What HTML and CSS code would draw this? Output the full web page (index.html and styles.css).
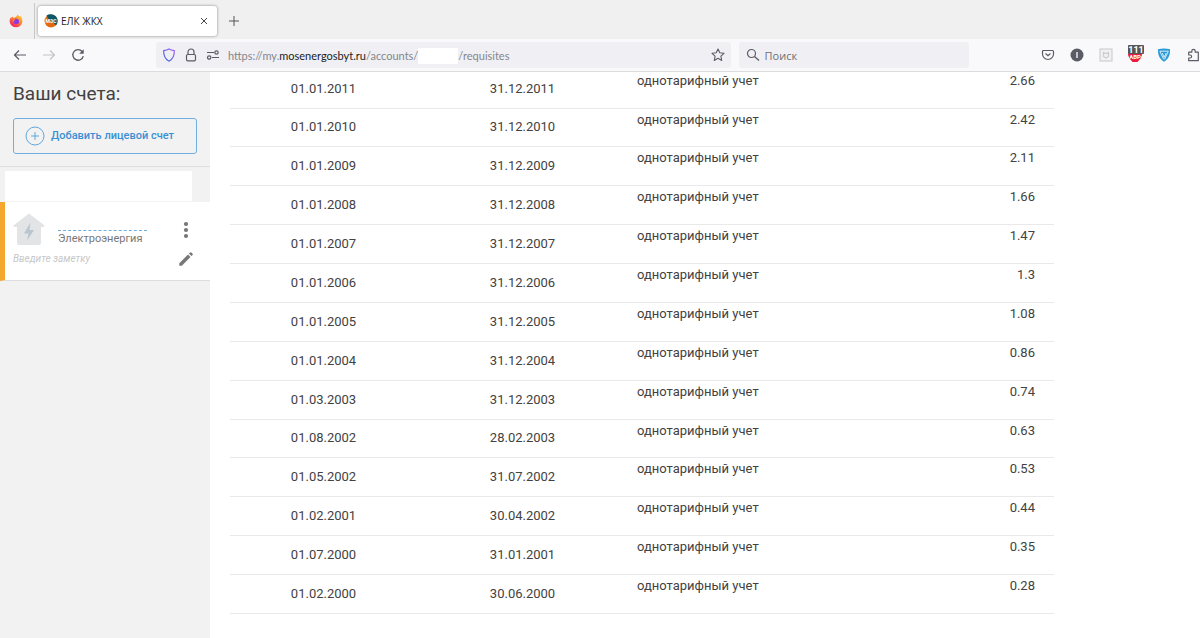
FILE: index.html
```html
<!DOCTYPE html>
<html lang="ru">
<head>
<meta charset="utf-8">
<title>ЕЛК ЖКХ</title>
<link rel="stylesheet" href="styles.css">
</head>
<body>
<header class="browser">
  <div class="tabs">
    <button class="firefox" aria-label="Firefox View">
      <svg width="14" height="14" viewBox="0 0 14 14"><defs><linearGradient id="fx" x1="1" y1="0" x2="0.2" y2="1"><stop offset="0" stop-color="#ffe23a"/><stop offset=".45" stop-color="#ff8a2a"/><stop offset="1" stop-color="#f5156c"/></linearGradient></defs><path d="M8.6.4c1 .8 1.2 1.6 1.7 2.2l.8-.5c1.500 1.300 2.500 3.400 2.300 5.600A6.400 6.400 0 0 1 .7 7.800C.6 5.800 1.100 4.200 2.300 3l.2 1 1.100-1.500.7 1.400C6.100 3.500 7.500 2.500 8.600.4z" fill="url(#fx)"/><circle cx="7.300" cy="7.400" r="2.700" fill="#8a3be0"/><path d="M3.300 5.600c1.300-.8 2.600-.3 3.300.6-1.400 0-1.800.7-1.800 1.600-.8-.4-1.400-1.200-1.500-2.200z" fill="#ff8427"/></svg>
    </button>
    <div class="tab">
      <svg width="14" height="14" viewBox="0 0 14 14"><circle cx="7" cy="7" r="6.500" fill="#e06a12"/><path d="M2.500 1.500C6-.8 11.500.5 13.200 4.500c.8 2.500.3 5-1.200 7L9.500 8.500 4.500 5z" fill="#0c5866"/><text x="7" y="8.800" text-anchor="middle" class="favicon-text">МЭС</text></svg>
      <span class="tab-title">ЕЛК ЖКХ</span>
      <button class="tab-close" aria-label="Закрыть вкладку"><svg width="8" height="8" viewBox="0 0 8 8"><path d="M1 1l6 6M7 1L1 7" stroke="#444" fill="none"/></svg></button>
    </div>
    <button class="new-tab" aria-label="Новая вкладка"><svg width="12" height="12" viewBox="0 0 12 12"><path d="M6 1v10M1 6h10" stroke="#555" fill="none"/></svg></button>
  </div>
  <div class="toolbar">
    <nav class="history">
      <button class="tool" aria-label="Назад"><svg width="14" height="14" viewBox="0 0 14 14"><path d="M13 7H1.500M6 2.500L1.500 7 6 11.500" stroke="#5b5b66" stroke-width="1.200" fill="none"/></svg></button>
      <button class="tool" aria-label="Вперёд" disabled><svg width="14" height="14" viewBox="0 0 14 14"><path d="M1 7h11.500M8 2.500L12.500 7 8 11.500" stroke="#c3c3c8" stroke-width="1.200" fill="none"/></svg></button>
      <button class="tool" aria-label="Обновить"><svg width="14" height="14" viewBox="0 0 14 14"><path d="M11.200 3.500A5.300 5.300 0 1 0 12.300 8.200" stroke="#5b5b66" stroke-width="1.300" fill="none"/><path d="M12.700 1.200v4.500H8.200z" fill="#5b5b66"/></svg></button>
    </nav>
    <div class="urlbar">
      <svg width="14" height="14" viewBox="0 0 14 14"><defs><linearGradient id="sh" x1="1" y1="0" x2="0" y2="1"><stop offset="0" stop-color="#a35cf0"/><stop offset="1" stop-color="#3d6be0"/></linearGradient></defs><path d="M7 1c1.600 1 3.400 1.400 5.300 1.600C12.500 8 11 11.300 7 13.200 3 11.300 1.500 8 1.700 2.600 3.600 2.400 5.400 2 7 1z" fill="none" stroke="url(#sh)" stroke-width="1.200"/></svg>
      <svg width="14" height="14" viewBox="0 0 14 14"><rect x="2.500" y="6.500" width="9" height="6.300" rx="1.300" fill="none" stroke="#5b5b66" stroke-width="1.200"/><path d="M4 6.500V4a3 3 0 0 1 6 0v2.500" fill="none" stroke="#5b5b66" stroke-width="1.200"/></svg>
      <svg width="14" height="14" viewBox="0 0 14 14"><g fill="none" stroke="#5b5b66" stroke-width="1.200"><path d="M1 4.500h7M6 9.500h7"/><circle cx="10.500" cy="4.500" r="1.700"/><circle cx="3.200" cy="9.500" r="1.700"/></g></svg>
      <div class="url" role="textbox" aria-label="Адрес">https://my.<b class="host">mosenergosbyt.ru</b>/accounts/<span class="blank"></span>/requisites</div>
      <button class="star" aria-label="Добавить в закладки"><svg width="14" height="14" viewBox="0 0 14 14"><path d="M7 1l1.800 3.800 4.200.5-3.100 2.900.8 4.200L7 10.300l-3.700 2.100.8-4.200L1 5.300l4.200-.5z" fill="none" stroke="#5b5b66" stroke-width="1.100" stroke-linejoin="round"/></svg></button>
    </div>
    <label class="search">
      <svg width="14" height="14" viewBox="0 0 14 14"><circle cx="5.500" cy="5.500" r="4" fill="none" stroke="#5b5b66" stroke-width="1.200"/><path d="M8.500 8.500l4.500 4" stroke="#5b5b66" stroke-width="1.300"/></svg>
      <input class="search-input" type="text" placeholder="Поиск" aria-label="Поиск">
    </label>
    <div class="extensions">
      <button class="tool" aria-label="Pocket"><svg width="14" height="14" viewBox="0 0 14 14"><path d="M2.500 2.500h9a1 1 0 0 1 1 1V6a5.500 5.500 0 0 1-11 0V3.500a1 1 0 0 1 1-1z" fill="none" stroke="#5b5b66" stroke-width="1.200"/><path d="M4.500 5.500L7 7.800l2.500-2.300" fill="none" stroke="#5b5b66" stroke-width="1.200"/></svg></button>
      <button class="tool" aria-label="Инфо"><svg width="14" height="14" viewBox="0 0 14 14"><circle cx="7" cy="7" r="6.500" fill="#5b5b66"/><path d="M7 4v6" stroke="#fff" stroke-width="1.300"/></svg></button>
      <button class="tool" aria-label="McAfee"><svg width="14" height="14" viewBox="0 0 14 14"><rect x="1" y="1" width="12" height="12" fill="#f1f1f3" stroke="#cfcfd3" stroke-width="1.200"/><path d="M4.500 4.500L7 5.600l2.500-1.100v4L7 10 4.500 8.500z" fill="none" stroke="#cbcbcf" stroke-width="1.200"/></svg></button>
      <button class="tool" aria-label="Adblock Plus"><svg width="18" height="20" viewBox="0 0 18 20"><path d="M3 5h12l1 5-1.500 3.500-3 3.500h-5l-3-3.500L2 10z" fill="#ee1c3c"/><text x="9" y="14" text-anchor="middle" class="abp-text">ABP</text><rect x="2" y="0" width="16" height="9" rx="1" fill="#555"/><text x="10" y="8" text-anchor="middle" class="abp-count">111</text></svg></button>
      <button class="tool" aria-label="Adguard"><svg width="14" height="14" viewBox="0 0 14 14"><path d="M1 1.200C5 .4 9 .4 13 1.200 13.300 7 11.300 11 7 13.700 2.700 11 .7 7 1 1.200z" fill="#2b9bd8"/><path d="M3 3.200h8.300L7.500 11.500M2.800 3.200l3.800 8M5.300 5l1.900 4.500L9.200 5" fill="none" stroke="#fff" stroke-width=".8"/></svg></button>
      <button class="tool" aria-label="Расширения"><svg width="14" height="14" viewBox="0 0 14 14"><path d="M2.700 4.200h3.100V3a1.700 1.700 0 0 1 3.400 0v1.200h3.100v8.500H2.700V10h1.400a1.500 1.500 0 0 0 0-3H2.700z" fill="none" stroke="#5b5b66" stroke-width="1.200" stroke-linejoin="round"/></svg></button>
    </div>
  </div>
</header>
<div class="page">
  <aside class="sidebar">
    <section class="accounts">
      <h1 class="title">Ваши счета:</h1>
      <button class="add"><svg width="20" height="20" viewBox="0 0 20 20"><circle cx="10" cy="10" r="9" fill="none" stroke="#5fa8de"/><path d="M10 6v8M6 10h8" stroke="#5fa8de"/></svg>Добавить лицевой счет</button>
    </section>
    <div class="address"></div>
    <section class="account">
      <svg class="house" width="32" height="34" viewBox="0 0 32 34"><path d="M16 .5L31 12c1 1 .5 2-.8 2H28v16a2 2 0 0 1-2 2H6a2 2 0 0 1-2-2V14H1.800C.5 14 0 13 1 12z" fill="#e2e4e5"/><path d="M17.500 9.500L11 20.500h4.500L14 27.500l7-10.500h-4.500z" fill="#b9c6cf"/></svg>
      <div class="service"><span class="number"></span>Электроэнергия</div>
      <button class="icon" aria-label="Меню"><svg width="16" height="18" viewBox="0 0 16 18"><g fill="#777"><circle cx="8" cy="3" r="2.100"/><circle cx="8" cy="9" r="2.100"/><circle cx="8" cy="15" r="2.100"/></g></svg></button>
      <input class="note" type="text" placeholder="Введите заметку" aria-label="Заметка">
      <button class="icon" aria-label="Изменить"><svg width="16" height="16" viewBox="0 0 16 16"><path d="M1.300 13.200L10 4.500l2.500 2.500-8.700 8.700H1.300zM10.900 3.600l1.200-1.200q.6-.4 1.200 0l1.300 1.300q.4.6 0 1.200l-1.200 1.200z" fill="#777"/></svg></button>
    </section>
  </aside>
  <main class="content">
    <table class="rates">
      <tbody>
        <tr><td class="date from">01.01.2011</td><td class="date to">31.12.2011</td><td class="kind">однотарифный учет</td><td class="rate">2.66</td></tr>
        <tr><td class="date from">01.01.2010</td><td class="date to">31.12.2010</td><td class="kind">однотарифный учет</td><td class="rate">2.42</td></tr>
        <tr><td class="date from">01.01.2009</td><td class="date to">31.12.2009</td><td class="kind">однотарифный учет</td><td class="rate">2.11</td></tr>
        <tr><td class="date from">01.01.2008</td><td class="date to">31.12.2008</td><td class="kind">однотарифный учет</td><td class="rate">1.66</td></tr>
        <tr><td class="date from">01.01.2007</td><td class="date to">31.12.2007</td><td class="kind">однотарифный учет</td><td class="rate">1.47</td></tr>
        <tr><td class="date from">01.01.2006</td><td class="date to">31.12.2006</td><td class="kind">однотарифный учет</td><td class="rate">1.3</td></tr>
        <tr><td class="date from">01.01.2005</td><td class="date to">31.12.2005</td><td class="kind">однотарифный учет</td><td class="rate">1.08</td></tr>
        <tr><td class="date from">01.01.2004</td><td class="date to">31.12.2004</td><td class="kind">однотарифный учет</td><td class="rate">0.86</td></tr>
        <tr><td class="date from">01.03.2003</td><td class="date to">31.12.2003</td><td class="kind">однотарифный учет</td><td class="rate">0.74</td></tr>
        <tr><td class="date from">01.08.2002</td><td class="date to">28.02.2003</td><td class="kind">однотарифный учет</td><td class="rate">0.63</td></tr>
        <tr><td class="date from">01.05.2002</td><td class="date to">31.07.2002</td><td class="kind">однотарифный учет</td><td class="rate">0.53</td></tr>
        <tr><td class="date from">01.02.2001</td><td class="date to">30.04.2002</td><td class="kind">однотарифный учет</td><td class="rate">0.44</td></tr>
        <tr><td class="date from">01.07.2000</td><td class="date to">31.01.2001</td><td class="kind">однотарифный учет</td><td class="rate">0.35</td></tr>
        <tr><td class="date from">01.02.2000</td><td class="date to">30.06.2000</td><td class="kind">однотарифный учет</td><td class="rate">0.28</td></tr>
      </tbody>
    </table>
  </main>
</div>
</body>
</html>
```
FILE: styles.css
```css
* { box-sizing: border-box; }
body {
  margin: 0;
  min-height: 100vh;
  display: flex;
  flex-direction: column;
  background: #fff;
  color: #424242;
  font: 13px/20px Roboto, sans-serif;
}
button { border: 0; padding: 0; background: none; font: inherit; color: inherit; }
svg { display: block; flex: none; }

.browser {
  position: relative;
  z-index: 1;
  border-bottom: 1px solid #dcdcde;
  background: #f9f9fb;
  font-family: "Open Sans", sans-serif;
  font-size: 11px;
}
.tabs { display: flex; align-items: center; height: 39px; padding-top: 3px; background: #f0f0f0; }
.firefox { display: flex; align-items: center; align-self: stretch; width: 35px; padding-left: 9px; border-right: 1px solid #c8c8c8; }
.tab {
  display: flex;
  align-items: center;
  gap: 3px;
  width: 179px;
  height: 30px;
  margin-left: 3px;
  padding: 0 9px 0 6px;
  border-radius: 3px;
  background: #fff;
  box-shadow: 0 0 3px rgba(0, 0, 0, .45);
}
.tab-title { flex: 1; color: #222; font-size: 10px; }
.tab-close { display: flex; }
.new-tab { margin-left: 11px; }
.favicon-text { font: bold 5px Roboto, sans-serif; fill: #fff; }

.toolbar { display: flex; align-items: center; height: 32px; overflow: hidden; }
.history { display: flex; width: 156px; padding-left: 5px; }
.tool { display: flex; flex: none; align-items: center; justify-content: center; width: 29px; height: 26px; }
.urlbar { display: flex; flex: 13; align-items: center; gap: 8px; height: 26px; padding: 0 6px; border-radius: 3px; background: #f0f0f4; }
.url { flex: 1; display: flex; align-items: center; padding-top: 2px; color: #85858c; font-family: Lato, sans-serif; white-space: nowrap; }
.host { color: #222; font-weight: 400; }
.blank { width: 40px; height: 16px; background: #fff; }
.search { display: flex; flex: 5; align-items: center; gap: 5px; height: 26px; margin-left: 8px; padding: 0 7px; border-radius: 3px; background: #f0f0f4; }
.search-input { flex: 1; min-width: 0; border: 0; padding: 2px 0 0; background: none; font: inherit; }
.search-input::placeholder { color: #6f6f76; }
.extensions { display: flex; width: 167px; margin-left: 64px; }
.abp-text { font: bold 6px Roboto, sans-serif; fill: #fff; }
.abp-count { font: bold 9px Roboto, sans-serif; fill: #fff; }

.page { display: flex; flex: 1; }
.sidebar { width: 210px; background: #f2f2f2; }
.accounts { padding: 10px 13px 12px; border-bottom: 1px solid #dedede; }
.title { margin: 0 0 12px; font-size: 19px; line-height: 24px; font-weight: 400; color: #424242; }
.add {
  display: flex;
  align-items: center;
  gap: 6px;
  width: 100%;
  height: 36px;
  padding: 0 11px;
  border: 1px solid #6fb0e0;
  border-radius: 3px;
  color: #3a90d4;
  font-size: 11px;
  font-weight: 500;
  white-space: nowrap;
}
.address { height: 30px; margin: 4px 18px 1px 5px; background: #fff; }
.account {
  display: grid;
  grid-template-columns: 32px 1fr 16px;
  column-gap: 13px;
  align-items: center;
  padding: 10px 16px 11px 8px;
  border-left: 5px solid #f5a62d;
  border-bottom: 1px solid #dedede;
  background: #fff;
}
.service { color: #777; font-size: 11px; line-height: 16px; padding-top: 7px; }
.number { display: block; width: 89px; border-top: 1px dashed #6fb0e0; margin-top: 11px; }
.icon { display: flex; }
.note { grid-column: 1 / 3; min-width: 0; height: 22px; border: 0; padding: 0; background: none; font: italic 10px Roboto, sans-serif; }
.note::placeholder { color: #c8c8c8; }

.content { flex: 1; padding: 0 146px 24px 20px; }
.rates { width: 100%; height: 544px; margin-top: -2px; border-collapse: collapse; table-layout: fixed; }
.rates td { padding: 0; border-bottom: 1px solid #e9e9e9; }
.rates .date { text-align: center; vertical-align: middle; }
.rates .from { width: 187px; }
.rates .to { width: 211px; }
.rates .kind { padding: 1px 0 0 9px; vertical-align: top; }
.rates .rate { padding: 1px 19px 0 0; text-align: right; vertical-align: top; }
```
